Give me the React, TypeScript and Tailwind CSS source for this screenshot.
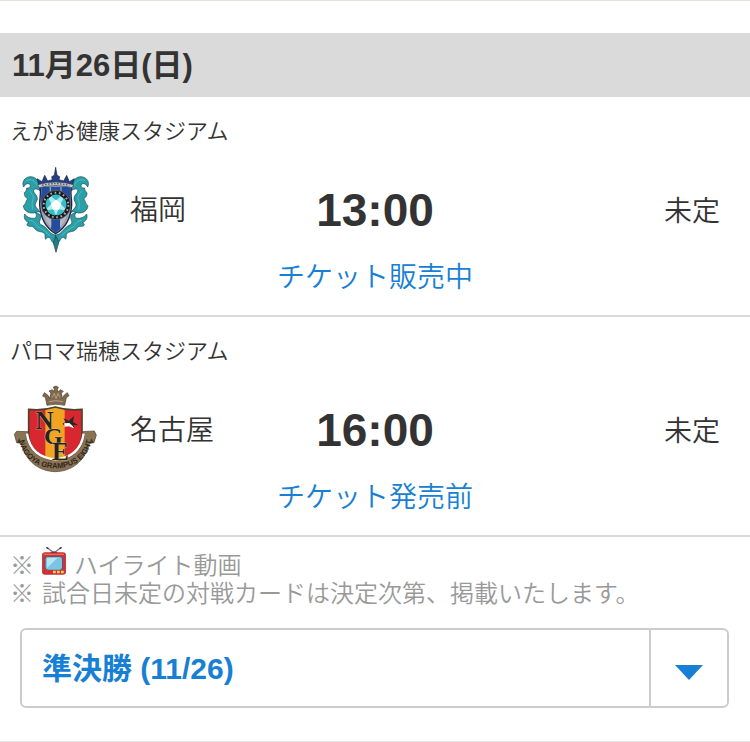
import { useState } from "react";

const AvispaEmblem = () => (
  <svg viewBox="30 30 270 270" className="h-full w-full" role="img" aria-label="福岡">
    {/* scrollwork, drawn once and mirrored */}
    {[undefined, "translate(334 0) scale(-1 1)"].map((flip, index) => (
      <g key={index} transform={flip} stroke="#1c4a55" strokeWidth="2" strokeLinejoin="round">
        <path
          fill="#2a9fa8"
          d="M121 108 C122 82 108 64 90 65 C73 67 64 82 71 96 C76 86 85 83 90 89 C93 96 87 100 80 99 C80 105 78 109 73 113 C72 122 77 128 83 131 C76 139 79 147 70 152 C71 166 83 175 100 174 C109 172 115 168 121 172 C114 162 105 157 106 148 C107 140 115 136 111 126 C109 118 99 113 101 106 C104 99 112 101 121 108 Z"
        />
        <path
          fill="#2a9fa8"
          d="M104 171 C112 178 110 188 103 190 C92 191 80 187 74 177 C70 191 77 199 87 203 C77 206 80 214 90 214 C97 213 101 216 105 222 C113 232 124 228 132 234 C138 239 133 245 137 253 C142 245 150 246 153 254 C155 261 160 264 168 266 V240 C155 240 147 228 138 219 C129 210 124 212 119 205 C116 198 127 190 119 178 Z"
        />
        <path
          fill="none"
          stroke="#4cc0c6"
          strokeWidth="3"
          d="M79 77 C94 69 107 79 112 93 M89 107 C93 116 102 121 100 131 C95 141 96 152 98 163 M89 196 C103 198 107 206 112 215 C126 219 141 233 149 242"
        />
      </g>
    ))}
    <path
      d="M118 90 C126 108 118 128 119 151 C122 191 141 221 167 236 C193 221 212 191 215 151 C216 128 208 108 216 90 Z"
      fill="#9ba2b0"
      stroke="#1d2745"
      strokeWidth="4"
    />
    <path d="M123 95 H149 V129 L123 151 C120 130 127 112 123 95 Z" fill="#234c9e" />
    <path d="M211 95 H185 V129 L211 151 C214 130 207 112 211 95 Z" fill="#234c9e" />
    <path d="M153 96 H181 V222 L167 233 L153 222 Z" fill="#234c9e" />
    <path d="M133 177 L154 193 V217 C144 208 137 194 133 177 Z M201 177 L180 193 V217 C190 208 197 194 201 177 Z" fill="#b4b8c1" />
    <path
      d="M117 91 L111 71 L126 80 L134 61 L143 78 L157 74 L155 65 L163 61 L167 37 L171 61 L179 65 L177 74 L191 78 L200 61 L208 80 L223 71 L217 91 Q167 79 117 91 Z"
      fill="#243f85"
      stroke="#17233f"
      strokeWidth="2"
      strokeLinejoin="round"
    />
    <path d="M113 89 Q167 73 221 89 L217 98 Q167 86 117 98 Z" fill="#c8ccd3" stroke="#343f58" strokeWidth="2" />
    <path d="M126 91 Q167 81 208 91" fill="none" stroke="#4a5265" strokeWidth="4" strokeDasharray="5 4" />
    <circle cx="168" cy="150" r="44" fill="#17191f" stroke="#717987" strokeWidth="2" />
    <circle cx="168" cy="150" r="37" fill="none" stroke="#a9aeb5" strokeWidth="6" strokeDasharray="5 8" />
    <circle cx="168" cy="150" r="30" fill="#aeeaec" />
    {/* football panels */}
    <path
      d="M157 124 Q168 118 179 124 L168 133 Z M192 133 Q199 143 196 157 L185 146 Z M191 168 Q184 177 172 179 L177 165 Z M145 168 Q152 177 164 179 L159 165 Z M144 133 Q137 143 140 157 L151 146 Z"
      fill="#35bdc7"
      stroke="#35bdc7"
      strokeWidth="5"
      strokeLinejoin="round"
    />
    <path
      d="M168 139 L179 147 L175 160 L161 160 L157 147 Z"
      fill="#fff"
      stroke="#fff"
      strokeWidth="8"
      strokeLinejoin="round"
    />
    <path d="M160 264 L163 254 L168 244 L173 254 L176 264 L173 274 L168 292 L163 274 Z" fill="#207f8b" stroke="#173b46" strokeWidth="2" />
  </svg>
);

const GrampusEmblem = () => (
  <svg viewBox="30 30 270 270" className="h-full w-full" role="img" aria-label="名古屋">
    <defs>
      <path id="ribbon-line" d="M57 188 C68 311 264 311 276 188" />
      <clipPath id="shield-clip">
        <path d="M86 103 Q126 108 166 96 Q205 108 246 103 V180 C246 223 207 245 166 264 C125 245 86 223 86 180 Z" />
      </clipPath>
    </defs>
    <path
      d="M141 91 L136 67 L128 63 L133 53 L143 60 L149 70 L153 54 L147 48 L157 44 L160 50 L163 43 L160 36 L168 33 L175 37 L172 44 L175 51 L181 44 L190 49 L184 55 L187 70 L193 60 L202 53 L207 62 L199 68 L194 91 Q168 84 141 91 Z"
      fill="#80694f"
      stroke="#4a3b2b"
      strokeWidth="2"
    />
    <path d="M147 80 Q168 74 189 80 M156 68 L163 55 L168 71 L174 55 L180 68" fill="none" stroke="#b5a080" strokeWidth="3" />
    <g clipPath="url(#shield-clip)">
      <path d="M80 90 H250 V270 H80 Z" fill="#d9272f" />
      <path d="M136 90 H194 V270 H136 Z" fill="#f2a420" />
    </g>
    <path
      d="M86 103 Q126 108 166 96 Q205 108 246 103 V180 C246 223 207 245 166 264 C125 245 86 223 86 180 Z"
      fill="none"
      stroke="#51402e"
      strokeWidth="5"
    />
    <path
      d="M43 178 L50 169 L85 170 L79 184 C86 228 119 254 166 257 C213 254 246 228 253 184 L247 170 L283 168 L289 180 L282 203 L269 205 C254 260 215 289 166 290 C117 289 78 260 63 205 L50 203 Z"
      fill="#8a7355"
      stroke="#4c3c2c"
      strokeWidth="2"
    />
    <path d="M81 176 C88 224 120 250 166 253 C212 250 244 224 251 176" fill="none" stroke="#fff" strokeWidth="7" />
    <path d="M50 203 L63 205 L58 190 Z M282 203 L269 205 L274 190 Z" fill="#4c3c2c" />
    <g
      fill="#262321"
      stroke="#e6c899"
      strokeWidth="2"
      paintOrder="stroke"
      className="font-['Liberation_Serif',serif] font-bold"
    >
      <text x="107" y="162" fontSize="74">N</text>
      <text x="132" y="207" fontSize="72">G</text>
      <text x="156" y="254" fontSize="76">E</text>
    </g>
    <path
      d="M187 146 L198 141 L190 130 L207 137 L222 123 L219 141 L235 151 L220 150 L224 159 L211 152 L195 153 Z"
      fill="#282525"
    />
    <path d="M192 145 L208 144 L218 153 L222 160 L206 154 L194 155 Z" fill="#fff" />
    <text
      fontSize="23"
      fill="#30261d"
      className="font-['Liberation_Sans',sans-serif] font-bold"
    >
      <textPath href="#ribbon-line" startOffset="50%" textAnchor="middle">
        NAGOYA GRAMPUS EIGHT
      </textPath>
    </text>
  </svg>
);

const TvIcon = () => (
  <svg viewBox="0 0 72 84" className="-mt-1.5 h-7 w-6 shrink-0" aria-hidden="true">
    <path d="M33 16 L17 3 M39 16 L55 3" fill="none" stroke="#777" strokeWidth="4" />
    <path d="M13 1 L19 5 M59 1 L53 5" stroke="#333" strokeWidth="4" />
    <path d="M24 18 Q36 8 48 18 Z" fill="#565656" />
    <rect x="1" y="17" width="70" height="65" rx="7" fill="#d92d32" stroke="#981e27" strokeWidth="2" />
    <path d="M5 22 H66" stroke="#f06a62" strokeWidth="4" />
    <rect x="8" y="28" width="55" height="42" rx="9" fill="#4f5f6e" />
    <rect x="11" y="30" width="49" height="38" rx="7" fill="#7cc4e4" />
    <path d="M16 33 H46 L15 63 V36 Z" fill="#b5e4f3" />
    <path d="M33 75 H66" stroke="#ffdd4e" strokeWidth="7" strokeDasharray="8 4" />
  </svg>
);

const matches = [
  {
    stadium: "えがお健康スタジアム",
    home: "福岡",
    away: "未定",
    time: "13:00",
    ticket: "チケット販売中",
    Emblem: AvispaEmblem,
  },
  {
    stadium: "パロマ瑞穂スタジアム",
    home: "名古屋",
    away: "未定",
    time: "16:00",
    ticket: "チケット発売前",
    Emblem: GrampusEmblem,
  },
];

const App = () => {
  const [round, setRound] = useState("semifinal");

  return (
    <main className="w-full border-y border-t-[#e8e0dc] border-b-[#e9e9e9] bg-white font-['Noto_Sans_CJK_JP',sans-serif] text-[#333]">
      <h2 className="mt-8 flex h-16 items-center bg-[#dadada] px-3 pt-0.5 font-['Liberation_Sans','Noto_Sans_CJK_JP',sans-serif] text-[31px] font-bold">
        11月26日(日)
      </h2>

      {matches.map(({ stadium, home, away, time, ticket, Emblem }) => (
        <section key={stadium} className="border-b-2 border-[#dadada] pt-[18px] pb-5">
          <h3 className="px-[10px] text-[22px] leading-7 font-[350]">{stadium}</h3>
          <div className="mt-[22px] grid h-[90px] grid-cols-[1fr_130px_1fr] items-center px-[10px] text-[28px] font-[350]">
            <div className="flex items-center gap-[30px]">
              <div className="h-[90px] w-[90px]">
                <Emblem />
              </div>
              <span className="pb-1">{home}</span>
            </div>
            <time className="text-center font-['Liberation_Sans',sans-serif] text-[46px] font-bold">
              {time}
            </time>
            <span className="pr-5 pb-0.5 text-right">{away}</span>
          </div>
          <div className="flex h-10 items-center justify-center">
            <a href="#ticket" className="text-[28px] font-[350] text-[#1780d4]">
              {ticket}
            </a>
          </div>
        </section>
      ))}

      <div className="px-[10px] pt-[13px] text-2xl leading-7 font-[350] text-[#999]">
        <p className="flex items-center gap-2">
          <span>※</span>
          <TvIcon />
          <span>ハイライト動画</span>
        </p>
        <p className="flex gap-2">
          <span>※</span>
          <span>試合日未定の対戦カードは決定次第、掲載いたします。</span>
        </p>
      </div>

      <div className="mt-[22px] mr-[21px] mb-[33px] ml-5 grid h-20 grid-cols-[1fr_78px] rounded-md border-2 border-[#ccc]">
        <select
          aria-label="節を選択"
          value={round}
          onChange={(event) => setRound(event.target.value)}
          className="col-span-2 col-start-1 row-start-1 w-full appearance-none bg-transparent pl-5 font-['Liberation_Sans','Noto_Sans_CJK_JP',sans-serif] text-[30px] font-bold text-[#1780d4]"
        >
          <option value="semifinal">準決勝 (11/26)</option>
        </select>
        <span className="pointer-events-none col-start-2 row-start-1 flex items-center justify-center border-l-2 border-[#ccc]">
          <svg viewBox="0 0 28 15" className="mt-2 h-[15px] w-7" aria-hidden="true">
            <path d="M0 0 H28 L14 15 Z" fill="#1780d4" />
          </svg>
        </span>
      </div>
    </main>
  );
};

export default App;
